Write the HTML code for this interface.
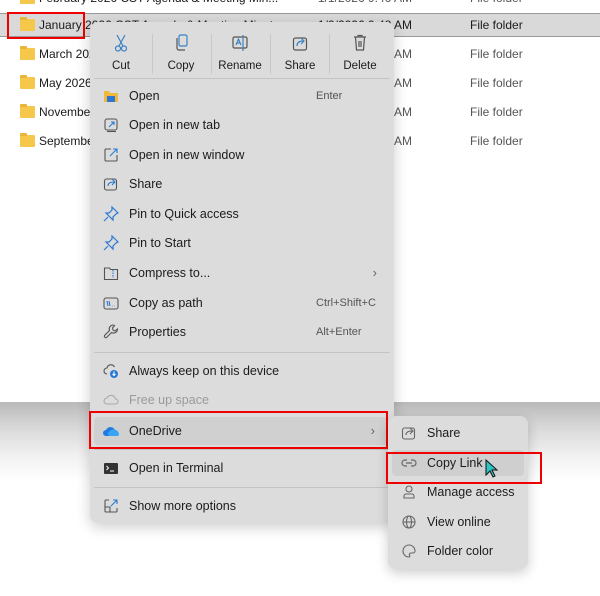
<!DOCTYPE html>
<html><head><meta charset="utf-8"><style>
*{margin:0;padding:0;box-sizing:border-box}
body{width:600px;height:596px;overflow:hidden;position:relative;font-family:"Liberation Sans",sans-serif;font-size:12px;color:#1b1b1b;background:#fff}
.bg{position:absolute;left:0;top:402px;width:600px;height:194px;background:linear-gradient(#b9b9b9 0px,#d8d8d8 25px,#f2f2f2 55px,#fff 80px)}
.ex{position:absolute;left:0;top:0;width:600px;height:402px;background:#fff}
.row{position:absolute;left:0;width:600px;height:22px;font-size:12px;line-height:22px}
.row .fd{position:absolute;left:20px;top:5px;width:15px;height:12px;background:#f5c84c;border-radius:1px}
.row .fd:before{content:"";position:absolute;left:0;top:-2px;width:7px;height:3px;background:#e8b53a;border-radius:1px 1px 0 0}
.row .n{position:absolute;left:39px}
.row .t{position:absolute;left:470px;color:#555}
.row .d{position:absolute;right:188px;color:#555}
.sel{background:#d9d9d9;border-top:1px solid #9a9a9a;border-bottom:1px solid #9a9a9a}
.menu{position:absolute;left:90px;top:22px;width:304px;height:501px;background:#dcdcdc;border-radius:8px;box-shadow:0 4px 14px rgba(0,0,0,.2)}
.sub{position:absolute;left:388px;top:416px;width:140px;height:153px;background:#dcdcdc;border-radius:8px;box-shadow:0 4px 12px rgba(0,0,0,.2)}
.it{position:absolute;left:0;width:100%;height:26px;line-height:26px;font-size:12.5px}
.it .l{position:absolute;left:39px}
.it .k{position:absolute;left:226px;font-size:11px;color:#555}
.it .ch{position:absolute;right:17px;font-size:13px;color:#666}
.it .ic{position:absolute;left:13px;top:5px;width:16px;height:16px}
.sep{position:absolute;left:4px;right:4px;height:1px;background:#c4c4c4}
.tb{position:absolute;top:12px;width:60px;text-align:center;font-size:11.5px}
.tb svg{display:block;margin:0 auto 8px}
.vs{position:absolute;top:12px;width:1px;height:40px;background:#c8c8c8}
.red{position:absolute;border:2px solid #e00}
</style></head><body>
<div class="ex">
<div class="row" style="top:-13px"><span class="fd"></span><span class="n">February 2026 CST Agenda &amp; Meeting Min...</span><span class="d">1/1/2026 9:46 AM</span><span class="t">File folder</span></div>
<div class="row sel" style="top:13px;height:24px"><span class="fd"></span><span class="n">January 2026 CST Agenda &amp; Meeting Minutes</span><span class="d" style="color:#1b1b1b">1/2/2026 9:48 AM</span><span class="t" style="color:#1b1b1b">File folder</span></div>
<div class="row" style="top:43px"><span class="fd"></span><span class="n">March 2026</span><span class="d">1/2/2026 9:49 AM</span><span class="t">File folder</span></div>
<div class="row" style="top:72px"><span class="fd"></span><span class="n">May 2026</span><span class="d">1/2/2026 9:49 AM</span><span class="t">File folder</span></div>
<div class="row" style="top:101px"><span class="fd"></span><span class="n">November</span><span class="d">1/2/2026 9:50 AM</span><span class="t">File folder</span></div>
<div class="row" style="top:130px"><span class="fd"></span><span class="n">September</span><span class="d">1/2/2026 9:50 AM</span><span class="t">File folder</span></div>
</div>
<div class="bg"></div>
<div class="red" style="left:7px;top:12px;width:78px;height:27px"></div>

<div class="menu">
<div class="tb" style="left:1px"><svg width="16" height="18" viewBox="0 0 16 18" fill="none" stroke="#3b82c4" stroke-width="1.2"><path d="M4 1l6 11M12 1L6 12"/><circle cx="5" cy="14.5" r="2.5"/><circle cx="11" cy="14.5" r="2.5"/></svg>Cut</div>
<div class="vs" style="left:62px"></div>
<div class="tb" style="left:61px"><svg width="16" height="18" viewBox="0 0 16 18" fill="none" stroke="#555" stroke-width="1.2"><rect x="6" y="1" width="8" height="11" rx="1.5" stroke="#3b82c4"/><path d="M4 4v10a2 2 0 0 0 2 2h6"/></svg>Copy</div>
<div class="vs" style="left:121px"></div>
<div class="tb" style="left:120px"><svg width="18" height="18" viewBox="0 0 18 18" fill="none" stroke="#555" stroke-width="1.2"><rect x="2" y="3" width="14" height="11" rx="1.5"/><path d="M5 11l2.5-6 2.5 6M6 9h3" stroke="#3b82c4"/><path d="M12 1v16" stroke="#3b82c4"/></svg>Rename</div>
<div class="vs" style="left:180px"></div>
<div class="tb" style="left:180px"><svg width="16" height="18" viewBox="0 0 16 18" fill="none" stroke="#555" stroke-width="1.2"><rect x="1.5" y="4" width="13" height="12" rx="2"/><path d="M5 12c0-4 3-5 6-5M9 4l3 3-3 3" stroke="#3b82c4"/></svg>Share</div>
<div class="vs" style="left:239px"></div>
<div class="tb" style="left:240px"><svg width="16" height="18" viewBox="0 0 16 18" fill="none" stroke="#555" stroke-width="1.2"><path d="M2 3h12M6 3V1.5h4V3M3.5 3l1 13h7l1-13M7 7v6M9 7v6"/></svg>Delete</div>
<div class="sep" style="top:56px"></div>

<div class="it" style="top:61px"><svg class="ic" viewBox="0 0 16 16"><path d="M1 3h5l1 2h8v9H1z" fill="#f0b93a"/><rect x="4" y="8" width="8" height="6" fill="#2a78d4"/></svg><span class="l">Open</span><span class="k">Enter</span></div>
<div class="it" style="top:90px"><svg class="ic" viewBox="0 0 16 16" fill="none" stroke="#555" stroke-width="1.1"><rect x="2" y="2" width="12" height="11" rx="2"/><path d="M4 14.5h9" /><path d="M6 10l5-5M8 5h3v3" stroke="#2a78d4"/></svg><span class="l">Open in new tab</span></div>
<div class="it" style="top:120px"><svg class="ic" viewBox="0 0 16 16" fill="none" stroke="#555" stroke-width="1.1"><path d="M8 2H3a1 1 0 0 0-1 1v10a1 1 0 0 0 1 1h10a1 1 0 0 0 1-1V8"/><path d="M7 9l7-7M10 2h4v4" stroke="#2a78d4"/></svg><span class="l">Open in new window</span></div>
<div class="it" style="top:149px"><svg class="ic" viewBox="0 0 16 16" fill="none" stroke="#555" stroke-width="1.1"><rect x="1.5" y="3" width="12" height="11" rx="2"/><path d="M5 10c0-3 3-4 6-4M9 3l3 3-3 3" stroke="#2a78d4"/></svg><span class="l">Share</span></div>
<div class="it" style="top:179px"><svg class="ic" viewBox="0 0 16 16" fill="none" stroke="#2a78d4" stroke-width="1.2"><path d="M9 1l6 6-2 1-3 3 0 3-7-7 3 0 3-3z M5 11l-4 4"/></svg><span class="l">Pin to Quick access</span></div>
<div class="it" style="top:208px"><svg class="ic" viewBox="0 0 16 16" fill="none" stroke="#2a78d4" stroke-width="1.2"><path d="M9 1l6 6-2 1-3 3 0 3-7-7 3 0 3-3z M5 11l-4 4"/></svg><span class="l">Pin to Start</span></div>
<div class="it" style="top:238px"><svg class="ic" viewBox="0 0 16 16" fill="none" stroke="#555" stroke-width="1.1"><path d="M1.5 3h5l1 1.5h7v10h-13z"/><path d="M10 5v8" stroke="#2a78d4" stroke-dasharray="1.5 1"/></svg><span class="l">Compress to...</span><span class="ch">›</span></div>
<div class="it" style="top:268px"><svg class="ic" viewBox="0 0 16 16" fill="none" stroke="#555" stroke-width="1.1"><rect x="1" y="3" width="14" height="11" rx="2"/><path d="M4 6l1 5M6 6l1 5M9 11h.5M11 11h.5" stroke="#2a78d4"/></svg><span class="l">Copy as path</span><span class="k">Ctrl+Shift+C</span></div>
<div class="it" style="top:297px"><svg class="ic" viewBox="0 0 16 16" fill="none" stroke="#555" stroke-width="1.1"><path d="M10 1a4 4 0 0 0-3.5 5.5L1.5 11.5a1.5 1.5 0 0 0 2 2l5-5A4 4 0 0 0 14.5 5l-2.5 2-2-1-.5-2 2-2.5z"/></svg><span class="l">Properties</span><span class="k">Alt+Enter</span></div>
<div class="sep" style="top:330px"></div>
<div class="it" style="top:336px"><svg class="ic" viewBox="0 0 16 16" fill="none" stroke="#555" stroke-width="1.1"><path d="M4 11a3 3 0 0 1 0-6 4 4 0 0 1 7.5-1"/><circle cx="11" cy="11" r="4" fill="#2a78d4" stroke="none"/><path d="M11 8.5v4M9.5 11l1.5 1.5 1.5-1.5" stroke="#fff"/></svg><span class="l">Always keep on this device</span></div>
<div class="it" style="top:365px;color:#9a9a9a"><svg class="ic" viewBox="0 0 16 16" fill="none" stroke="#aaa" stroke-width="1.1"><path d="M4 12a3 3 0 0 1 0-6 4.5 4.5 0 0 1 8.5 1 2.5 2.5 0 0 1 0 5z"/></svg><span class="l">Free up space</span></div>
<div class="it" style="top:395px;left:4px;width:294px;height:28px;line-height:28px;background:#d0d0d0;border-radius:4px"><svg class="ic" style="left:9px;top:6px" viewBox="0 0 16 16"><path d="M3 13a3 3 0 0 1 0-6 5 5 0 0 1 9 0 3 3 0 0 1 0 6z" fill="#1e7ce0"/><path d="M6 13a3 3 0 0 1 1-5 4 4 0 0 1 7 1 2 2 0 0 1 0 4z" fill="#38a4f5"/></svg><span class="l" style="left:35px">OneDrive</span><span class="ch" style="right:13px">›</span></div>
<div class="sep" style="top:427px"></div>
<div class="it" style="top:433px"><svg class="ic" viewBox="0 0 16 16"><rect x="1" y="3" width="14" height="11" rx="1" fill="#333"/><path d="M3.5 6l2 2-2 2M7 11h4" stroke="#fff" fill="none"/></svg><span class="l">Open in Terminal</span></div>
<div class="sep" style="top:465px"></div>
<div class="it" style="top:471px"><svg class="ic" viewBox="0 0 16 16" fill="none" stroke="#555" stroke-width="1.1"><path d="M6 2H3a1 1 0 0 0-1 1v10a1 1 0 0 0 1 1h10a1 1 0 0 0 1-1V10M2 9h5v5"/><path d="M8 8l6-6M10 2h4v4" stroke="#2a78d4"/></svg><span class="l">Show more options</span></div>
</div>
<div class="red" style="left:89px;top:411px;width:299px;height:38px"></div>

<div class="sub">
<div class="it" style="top:4px"><svg class="ic" viewBox="0 0 16 16" fill="none" stroke="#666" stroke-width="1.1"><rect x="1.5" y="3" width="12" height="11" rx="2"/><path d="M5 10c0-3 3-4 6-4M9 3l3 3-3 3"/></svg><span class="l">Share</span></div>
<div class="it" style="top:34px;left:4px;width:132px;background:#cfcfcf;border-radius:4px"><svg class="ic" style="left:9px" viewBox="0 0 16 16" fill="none" stroke="#666" stroke-width="1.2"><path d="M6 5H4a3 3 0 0 0 0 6h2M10 5h2a3 3 0 0 1 0 6h-2M5 8h6"/></svg><span class="l" style="left:35px">Copy Link</span></div>
<div class="it" style="top:63px"><svg class="ic" viewBox="0 0 16 16" fill="none" stroke="#666" stroke-width="1.1"><circle cx="8" cy="5" r="3"/><path d="M3 14v-2a2 2 0 0 1 2-2h6a2 2 0 0 1 2 2v2z"/></svg><span class="l">Manage access</span></div>
<div class="it" style="top:93px"><svg class="ic" viewBox="0 0 16 16" fill="none" stroke="#666" stroke-width="1.1"><circle cx="8" cy="8" r="6"/><ellipse cx="8" cy="8" rx="2.5" ry="6"/><path d="M2 8h12"/></svg><span class="l">View online</span></div>
<div class="it" style="top:122px"><svg class="ic" viewBox="0 0 16 16" fill="none" stroke="#666" stroke-width="1.1"><path d="M8 2a6 6 0 1 0 0 12c1 0 1-1 .5-2s0-2 1.5-2h2a2 2 0 0 0 2-2A6 6 0 0 0 8 2z"/></svg><span class="l">Folder color</span></div>
</div>
<div class="red" style="left:386px;top:452px;width:156px;height:32px"></div>
<svg style="position:absolute;left:485px;top:459px" width="14" height="20" viewBox="0 0 14 20"><path d="M1 1v15l4-4 3 6 2-1-3-6h5z" fill="#2ec4c4" stroke="#111" stroke-width="1"/></svg>
</body></html>
